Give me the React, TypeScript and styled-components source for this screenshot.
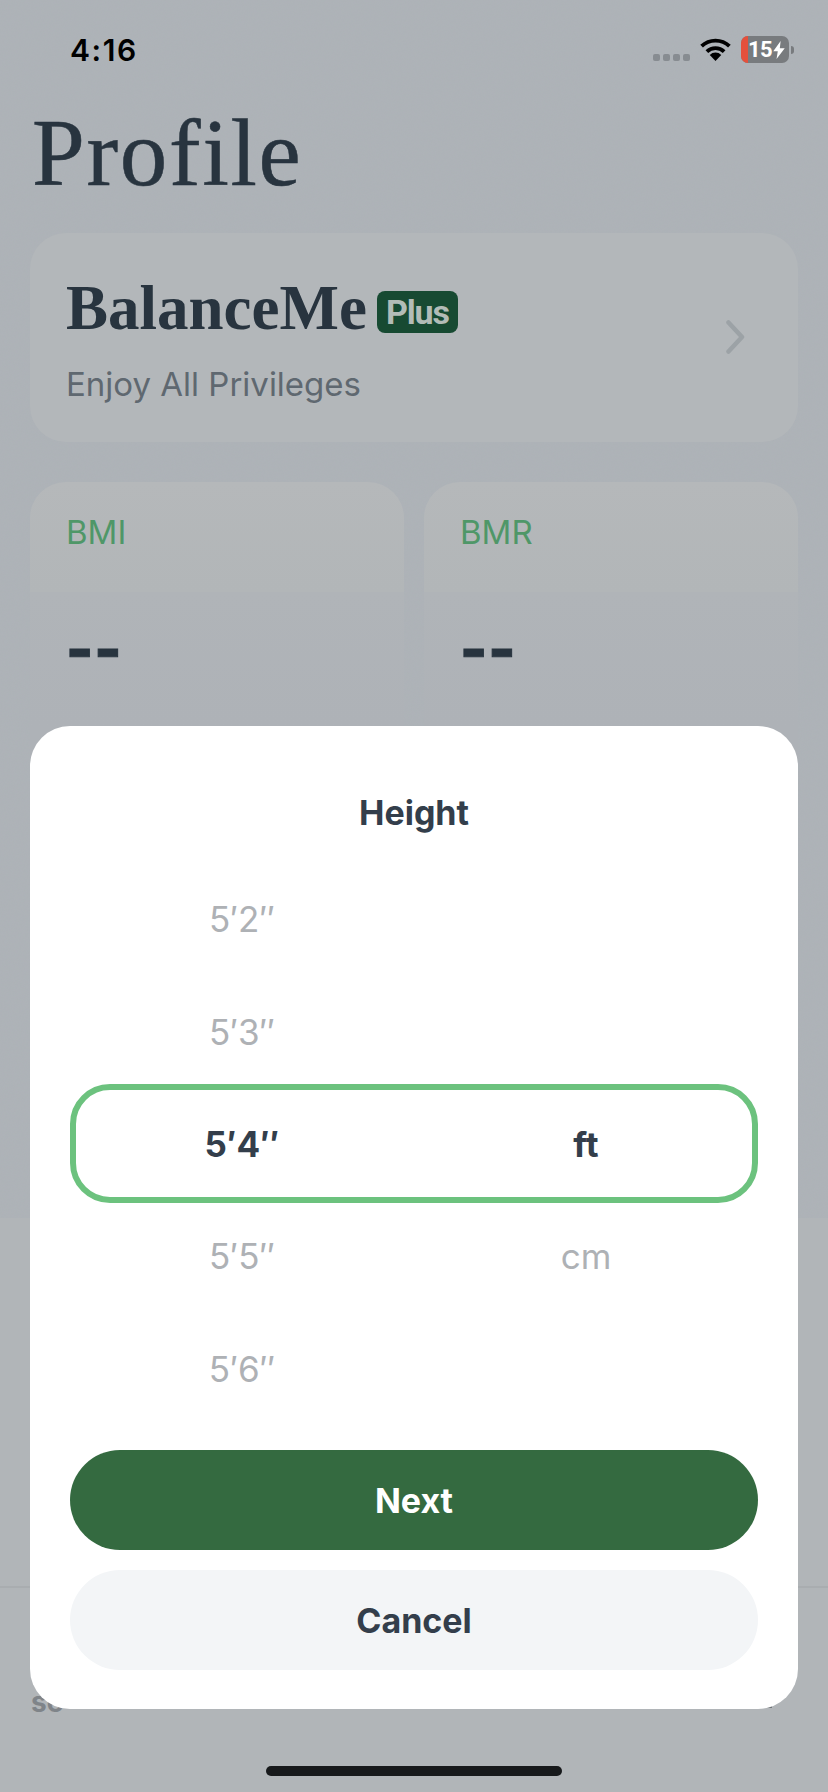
import React from "react";
import styled, { createGlobalStyle } from "styled-components";

const Global = createGlobalStyle`
  html, body { margin: 0; padding: 0; background: #b1b5b8; }
  body { font-family: Inter, "Liberation Sans", sans-serif; }
  * { box-sizing: border-box; }
`;

const grain = `url("data:image/svg+xml,%3Csvg xmlns='http://www.w3.org/2000/svg' width='300' height='300'%3E%3Cfilter id='n'%3E%3CfeTurbulence type='fractalNoise' baseFrequency='0.7' numOctaves='2'/%3E%3CfeColorMatrix values='0 0 0 0 0.4 0 0 0 0 0.42 0 0 0 0 0.44 0 0 0 0.2 0'/%3E%3C/filter%3E%3Crect width='300' height='300' filter='url(%23n)'/%3E%3C/svg%3E")`;

const Phone = styled.div`
  position: relative;
  width: 828px;
  height: 1792px;
  overflow: hidden;
  background: #b1b5b8;
`;

const Backdrop = styled.div`
  height: 1218px;
  padding: 0 30px;
  background-color: #aeb3b8;
  background-image: ${grain};
  display: flex;
  flex-direction: column;
`;

const StatusBar = styled.div`
  height: 100px;
  display: flex;
  align-items: flex-start;
  justify-content: space-between;
`;

const Time = styled.div`
  margin: 32px 0 0 40px;
  font-size: 30px;
  line-height: 36px;
  font-weight: 600;
  letter-spacing: 1.6px;
  color: #000;
`;

const StatusIcons = styled.div`
  display: flex;
  align-items: flex-start;
  margin: 36px 4px 0 0;
`;

const Dots = styled.div`
  display: flex;
  gap: 3px;
  margin: 18px 10px 0 0;
`;

const Dot = styled.span`
  width: 7px;
  height: 7px;
  border-radius: 2px;
  background: #878c91;
`;

const WifiIcon = styled.svg`
  margin-top: 2px;
`;

const Battery = styled.div`
  position: relative;
  width: 48px;
  height: 27px;
  margin-left: 10px;
  border-radius: 7px;
  overflow: hidden;
  background: #787b7e;
  color: #fff;
  font-family: Roboto, sans-serif;
  font-weight: 700;
  font-size: 22px;
  line-height: 27px;
  letter-spacing: -0.6px;
  display: flex;
  align-items: center;
  gap: 1px;
  padding-left: 7px;
  &::before {
    content: "";
    position: absolute;
    left: 0;
    top: 0;
    bottom: 0;
    width: 7px;
    background: #e4503c;
  }
`;

const Nub = styled.span`
  width: 3px;
  height: 8px;
  margin: 10px 0 0 2px;
  border-radius: 0 3px 3px 0;
  background: #787b7e;
`;

const Title = styled.h1`
  margin: 0 0 0 2px;
  font-family: "Liberation Serif", serif;
  font-weight: 400;
  font-size: 95px;
  line-height: 106px;
  letter-spacing: 1.7px;
  -webkit-text-stroke: 0.5px #28343f;
  color: #28343f;
`;

const PlanCard = styled.div`
  margin-top: 27px;
  height: 209px;
  border-radius: 36px;
  background: #b3b7ba;
  padding: 44px 36px 0;
  position: relative;
`;

const PlanRow = styled.div`
  display: flex;
  align-items: center;
  gap: 10px;
  height: 62px;
`;

const Brand = styled.div`
  font-family: "Liberation Serif", serif;
  font-weight: 700;
  font-size: 63px;
  line-height: 62px;
  color: #28343f;
`;

const Badge = styled.div`
  width: 81px;
  height: 42px;
  margin-top: 8px;
  border-radius: 8px;
  background: #174a32;
  color: #b3bcb7;
  font-family: Roboto, sans-serif;
  font-weight: 700;
  font-size: 34px;
  line-height: 42px;
  letter-spacing: -1.2px;
  text-align: center;
`;

const PlanSub = styled.div`
  margin-top: 25px;
  font-size: 33px;
  line-height: 40px;
  color: #5f6870;
`;

const Chevron = styled.svg`
  position: absolute;
  right: 52px;
  top: 87px;
`;

const Stats = styled.div`
  margin-top: 40px;
  display: grid;
  grid-template-columns: 374px 374px;
  gap: 20px;
  flex: 1;
`;

const StatCard = styled.div`
  border-radius: 36px 36px 0 0;
  background: linear-gradient(#b5b8ba 0, #b2b6b8 110px, #b0b4b8 110px, #aeb2b7 244px);
  padding: 30px 36px 0;
`;

const StatLabel = styled.div`
  font-size: 33px;
  line-height: 40px;
  color: #4f9768;
`;

const StatValue = styled.div`
  margin-top: 67px;
  font-size: 58px;
  line-height: 60px;
  font-weight: 800;
  letter-spacing: 1px;
  -webkit-text-stroke: 1px #28343f;
  color: #28343f;
`;

const TabBar = styled.div`
  position: absolute;
  left: 0;
  right: 0;
  top: 1586px;
  border-top: 2px solid #a9adb0;
  height: 130px;
  padding: 98px 0 0 31px;
  &::after {
    content: "";
    position: absolute;
    right: 56px;
    top: 118px;
    width: 5px;
    height: 2px;
    background: #6f7478;
  }
`;

const TabText = styled.span`
  font-size: 28px;
  line-height: 32px;
  font-weight: 700;
  color: #7f8489;
`;

const Sheet = styled.div`
  position: absolute;
  left: 30px;
  top: 726px;
  width: 768px;
  height: 983px;
  border-radius: 40px;
  background: #fff;
  padding: 0 40px;
  display: flex;
  flex-direction: column;
`;

const SheetTitle = styled.div`
  margin-top: 67px;
  height: 40px;
  font-size: 34px;
  line-height: 40px;
  font-weight: 700;
  color: #333e4b;
  text-align: center;
`;

const Picker = styled.div`
  position: relative;
  margin-top: 21px;
  margin-bottom: 36px;
  height: 560px;
  display: grid;
  grid-template-columns: 344px 344px;
`;

const Highlight = styled.div`
  position: absolute;
  left: 0;
  right: 0;
  top: 230px;
  height: 119px;
  border: 6px solid #6cc27e;
  border-radius: 40px;
`;

const Column = styled.div`
  padding-top: 9px;
  display: grid;
  grid-auto-rows: 112.4px;
`;

const Cell = styled.div<{ $active?: boolean }>`
  display: flex;
  align-items: center;
  justify-content: center;
  font-size: 35px;
  font-weight: ${(p) => (p.$active ? 700 : 400)};
  color: ${(p) => (p.$active ? "#333e4b" : "#aeb1b5")};
`;

const Button = styled.button<{ $primary?: boolean }>`
  border: 0;
  width: 100%;
  height: 100px;
  border-radius: 50px;
  margin-bottom: 20px;
  font-family: Inter, sans-serif;
  font-size: 34px;
  font-weight: 700;
  background: ${(p) => (p.$primary ? "#346a40" : "#f3f5f7")};
  color: ${(p) => (p.$primary ? "#fff" : "#333e4b")};
`;

const HomeBar = styled.div`
  position: absolute;
  left: 266px;
  top: 1766px;
  width: 296px;
  height: 10px;
  border-radius: 5px;
  background: #17191b;
`;

const Wifi = () => (
  <WifiIcon width="31" height="23" viewBox="0 0 32 24">
    <path d="M1.5 8.5a21 21 0 0 1 29 0" fill="none" stroke="#000" strokeWidth="4" />
    <path d="M7 14.2a13 13 0 0 1 18 0" fill="none" stroke="#000" strokeWidth="4" />
    <path d="M16 24l-6-6.3a8.5 8.5 0 0 1 12 0z" fill="#000" />
  </WifiIcon>
);

const Bolt = () => (
  <svg width="12" height="18" viewBox="0 0 14 22">
    <path d="M9 0L0 12.5h5.5L4 22l10-13H8z" fill="#fff" />
  </svg>
);

export default function App() {
  return (
    <Phone>
      <Global />
      <Backdrop>
        <StatusBar>
          <Time>4:16</Time>
          <StatusIcons>
            <Dots>
              <Dot />
              <Dot />
              <Dot />
              <Dot />
            </Dots>
            <Wifi />
            <Battery>
              15
              <Bolt />
            </Battery>
            <Nub />
          </StatusIcons>
        </StatusBar>
        <Title>Profile</Title>
        <PlanCard>
          <PlanRow>
            <Brand>BalanceMe</Brand>
            <Badge>Plus</Badge>
          </PlanRow>
          <PlanSub>Enjoy All Privileges</PlanSub>
          <Chevron width="20" height="34" viewBox="0 0 20 34">
            <path d="M2.5 2.5l13.5 14.5L2.5 31.5" fill="none" stroke="#9ca2a6" strokeWidth="4.5" strokeLinecap="round" strokeLinejoin="round" />
          </Chevron>
        </PlanCard>
        <Stats>
          <StatCard>
            <StatLabel>BMI</StatLabel>
            <StatValue>--</StatValue>
          </StatCard>
          <StatCard>
            <StatLabel>BMR</StatLabel>
            <StatValue>--</StatValue>
          </StatCard>
        </Stats>
      </Backdrop>
      <TabBar>
        <TabText>se</TabText>
      </TabBar>
      <Sheet>
        <SheetTitle>Height</SheetTitle>
        <Picker>
          <Highlight />
          <Column>
            <Cell>5′2″</Cell>
            <Cell>5′3″</Cell>
            <Cell $active>5′4″</Cell>
            <Cell>5′5″</Cell>
            <Cell>5′6″</Cell>
          </Column>
          <Column>
            <Cell />
            <Cell />
            <Cell $active>ft</Cell>
            <Cell>cm</Cell>
            <Cell />
          </Column>
        </Picker>
        <Button $primary>Next</Button>
        <Button>Cancel</Button>
      </Sheet>
      <HomeBar />
    </Phone>
  );
}
